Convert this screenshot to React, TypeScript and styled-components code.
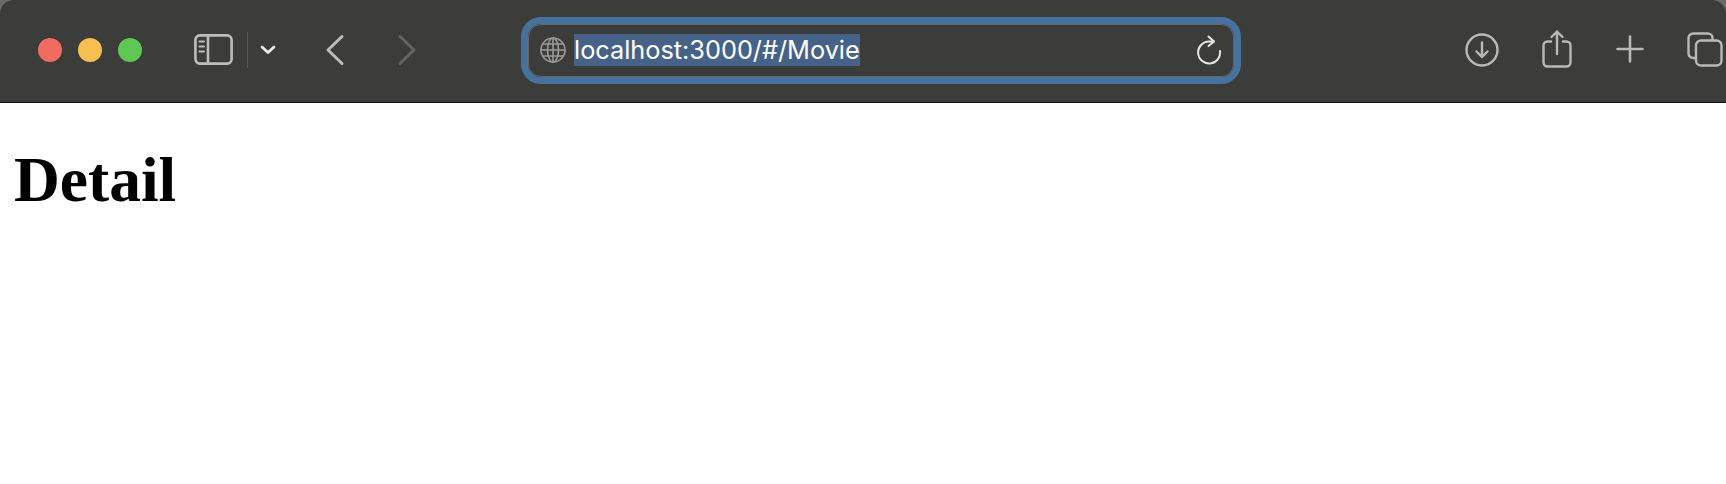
import React from "react";
import styled, { createGlobalStyle } from "styled-components";

const Global = createGlobalStyle`
  html, body { margin: 0; padding: 0; background: #fff; }
  #root { width: 1726px; height: 484px; overflow: hidden; }
`;

const Page = styled.div`
  width: 1726px;
  height: 484px;
  background: #fff;
  display: flex;
  flex-direction: column;
`;

const ToolbarWrap = styled.div`
  background: #6a6a68;
`;

const Toolbar = styled.header`
  box-sizing: border-box;
  height: 103px;
  background: #3c3c3a;
  border-bottom: 1.5px solid #0c0c0c;
  border-top-left-radius: 14px;
  border-top-right-radius: 14px;
  display: flex;
  align-items: center;
  padding-left: 38px;
  padding-bottom: 2px;
`;

const Lights = styled.div`
  display: flex;
  gap: 16px;
  margin-right: 52px;
`;

const Light = styled.span<{ $c: string }>`
  width: 24px;
  height: 24px;
  border-radius: 50%;
  background: ${(p) => p.$c};
`;

const Icon = styled.svg<{ $ml?: number; $mb?: number }>`
  display: block;
  flex: none;
  margin-left: ${(p) => p.$ml ?? 0}px;
  margin-bottom: ${(p) => p.$mb ?? 0}px;
  fill: none;
  stroke-linecap: round;
  stroke-linejoin: round;
`;

const Divider = styled.span`
  width: 1.5px;
  height: 36px;
  background: #575755;
  margin-left: 13.5px;
  margin-right: 11.5px;
`;

const AddressRing = styled.div`
  width: 720px;
  height: 67px;
  margin-left: 104px;
  box-sizing: border-box;
  border: 7px solid #47729d;
  border-radius: 20px;
  background: #3c3c3a;
  flex: none;
`;

const AddressField = styled.div`
  height: 100%;
  box-sizing: border-box;
  border: 1.5px solid #656563;
  border-radius: 13px;
  display: flex;
  align-items: center;
  padding: 0 10px 0 11.5px;
`;

const UrlText = styled.span`
  font-family: "Inter", "Liberation Sans", sans-serif;
  font-size: 25.3px;
  line-height: 32px;
  color: #fff;
  background: #476288;
  margin-left: 8px;
  white-space: nowrap;
`;

const Spacer = styled.span`
  flex: 1;
`;

const Heading = styled.h1`
  margin: 40px 0 0 14px;
  font-family: "Liberation Serif", "Times New Roman", serif;
  font-weight: 700;
  font-size: 63.5px;
  line-height: 74px;
  color: #000;
`;

export default function App() {
  return (
    <Page>
      <Global />
      <ToolbarWrap>
        <Toolbar>
          <Lights>
            <Light $c="#f16b60" />
            <Light $c="#f7bf4f" />
            <Light $c="#5fc754" />
          </Lights>
          <Icon $mb={2} width="39" height="31" viewBox="0 0 39 31" stroke="#bdbdbc" strokeWidth="2.6">
            <rect x="1.4" y="1.4" width="36.2" height="28.2" rx="4.5" />
            <path d="M14 1.4v28.2" />
            <path d="M5.5 7.5h4.5M5.5 12.5h4.5M5.5 17.5h4.5" strokeWidth="2" />
          </Icon>
          <Divider />
          <Icon width="16" height="10" viewBox="0 0 16 10" stroke="#ececec" strokeWidth="2.8">
            <path d="M2 2l6 5.5L14 2" />
          </Icon>
          <Icon $ml={49} width="20" height="32" viewBox="0 0 20 32" stroke="#bdbdbc" strokeWidth="3">
            <path d="M17 2.5L3 16l14 13.5" />
          </Icon>
          <Icon $ml={52} width="20" height="32" viewBox="0 0 20 32" stroke="#636361" strokeWidth="3">
            <path d="M3 2.5L17 16 3 29.5" />
          </Icon>
          <AddressRing>
            <AddressField>
              <Icon width="26" height="26" viewBox="0 0 26 26" stroke="#9a9a99" strokeWidth="1.6">
                <circle cx="13" cy="13" r="12" />
                <ellipse cx="13" cy="13" rx="5.5" ry="12" />
                <path d="M13 1v24M1 13h24M3 7h20M3 19h20" />
              </Icon>
              <UrlText>localhost:3000/#/Movie</UrlText>
              <Spacer />
              <Icon $mb={1} width="26" height="30" viewBox="0 0 26 30" stroke="#e6e6e5" strokeWidth="2">
                <path d="M17 6.5H12A11 11 0 1 0 23 16" />
                <path d="M11.5 1.5L17 6.5L11.5 11" />
              </Icon>
            </AddressField>
          </AddressRing>
          <Icon $ml={224} width="34" height="34" viewBox="0 0 34 34" stroke="#b9b9b8" strokeWidth="2.4">
            <circle cx="17" cy="17" r="15.5" />
            <path d="M17 9.5v14.5M11.5 18.5l5.5 5.5 5.5-5.5" />
          </Icon>
          <Icon $ml={43} $mb={3} width="30" height="38" viewBox="0 0 30 38" stroke="#b9b9b8" strokeWidth="2.4">
            <path d="M9 11.5H5.5a4 4 0 0 0-4 4V32.5a4 4 0 0 0 4 4h19a4 4 0 0 0 4-4V15.5a4 4 0 0 0-4-4H21" />
            <path d="M15 24V1.5M9.5 7L15 1.5 20.5 7" />
          </Icon>
          <Icon $ml={44} $mb={2} width="28" height="28" viewBox="0 0 28 28" stroke="#b9b9b8" strokeWidth="2.6">
            <path d="M14 1.5v25M1.5 14h25" />
          </Icon>
          <Icon $ml={43} $mb={1} width="36" height="35" viewBox="0 0 36 35" stroke="#b9b9b8" strokeWidth="2.4">
            <path d="M8 26H6a4.5 4.5 0 0 1-4.5-4.5V6A4.5 4.5 0 0 1 6 1.5h15A4.5 4.5 0 0 1 25.5 6v2" />
            <rect x="9" y="8.5" width="25.5" height="25" rx="5" />
          </Icon>
        </Toolbar>
      </ToolbarWrap>
      <Heading>Detail</Heading>
    </Page>
  );
}
